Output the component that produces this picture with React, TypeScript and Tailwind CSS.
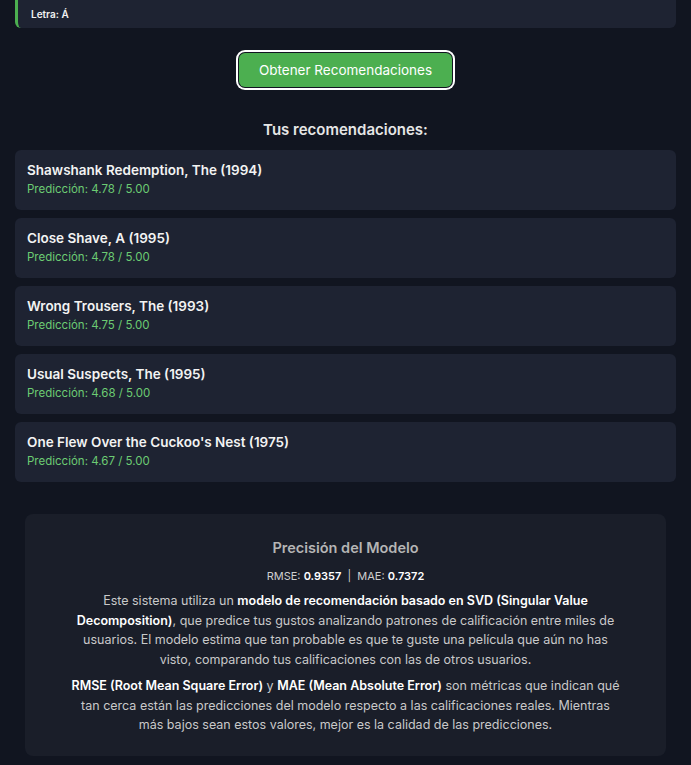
const recs = [
  { title: "Shawshank Redemption, The (1994)", score: "4.78" },
  { title: "Close Shave, A (1995)", score: "4.78" },
  { title: "Wrong Trousers, The (1993)", score: "4.75" },
  { title: "Usual Suspects, The (1995)", score: "4.68" },
  { title: "One Flew Over the Cuckoo's Nest (1975)", score: "4.67" },
];

export default function App() {
  return (
    <div className="min-h-[765px] bg-[#111520] font-['Inter',sans-serif] text-white">
      <div className="px-[15px]">
        {/* last question card, scrolled off the top */}
        <div className="flex h-[28px] items-end rounded-b-md border-l-[3px] border-[#4caf50] bg-[#1e2332] pb-[9px] pl-[13px]">
          <span className="text-[10px] font-semibold leading-none text-[#f1f1f1]">Letra: Á</span>
        </div>

        <div className="mt-[25px] flex justify-center">
          <button className="h-[34px] w-[213px] rounded-md bg-[#4caf50] text-[13.5px] text-white ring-2 ring-white ring-offset-1 ring-offset-[#111520]">
            Obtener Recomendaciones
          </button>
        </div>

        <h2 className="mt-[33px] text-center text-[15px] font-semibold leading-5 text-[#e6e6e6]">
          Tus recomendaciones:
        </h2>

        <div className="mt-[10px] flex flex-col gap-2">
          {recs.map((r) => (
            <div key={r.title} className="h-[60px] rounded-md bg-[#1e2332] px-3 pt-[12px]">
              <div className="text-[13.5px] font-semibold leading-4 text-[#f3f3f3]">{r.title}</div>
              <div className="mt-[3px] text-[11.5px] leading-4 text-[#6ccb73]">
                Predicción: {r.score} / 5.00
              </div>
            </div>
          ))}
        </div>
      </div>

      <div className="mx-[25px] mt-8 rounded-lg bg-[#1a1e29] px-10 pb-[21px] pt-[24px] text-center">
        <h3 className="text-[14.5px] font-semibold leading-5 text-[#b5b5b5]">Precisión del Modelo</h3>
        <p className="mt-[10px] text-[11px] leading-4 text-[#cfcfcf]">
          RMSE: <b className="font-semibold text-white">0.9357</b>&nbsp; | &nbsp;MAE:{" "}
          <b className="font-semibold text-white">0.7372</b>
        </p>
        <p className="mx-auto mt-[7px] max-w-[552px] text-[12.5px] leading-[19.5px] text-[#c9c9c9]">
          Este sistema utiliza un{" "}
          <b className="font-semibold text-white">
            modelo de recomendación basado en SVD (Singular Value Decomposition)
          </b>
          , que predice tus gustos analizando patrones de calificación entre miles de usuarios. El
          modelo estima que tan probable es que te guste una película que aún no has visto,
          comparando tus calificaciones con las de otros usuarios.
        </p>
        <p className="mx-auto mt-[7px] max-w-[552px] text-[12.5px] leading-[19.5px] text-[#c9c9c9]">
          <b className="font-semibold text-white">RMSE (Root Mean Square Error)</b> y{" "}
          <b className="font-semibold text-white">MAE (Mean Absolute Error)</b> son métricas que
          indican qué tan cerca están las predicciones del modelo respecto a las calificaciones
          reales. Mientras más bajos sean estos valores, mejor es la calidad de las predicciones.
        </p>
      </div>
    </div>
  );
}
